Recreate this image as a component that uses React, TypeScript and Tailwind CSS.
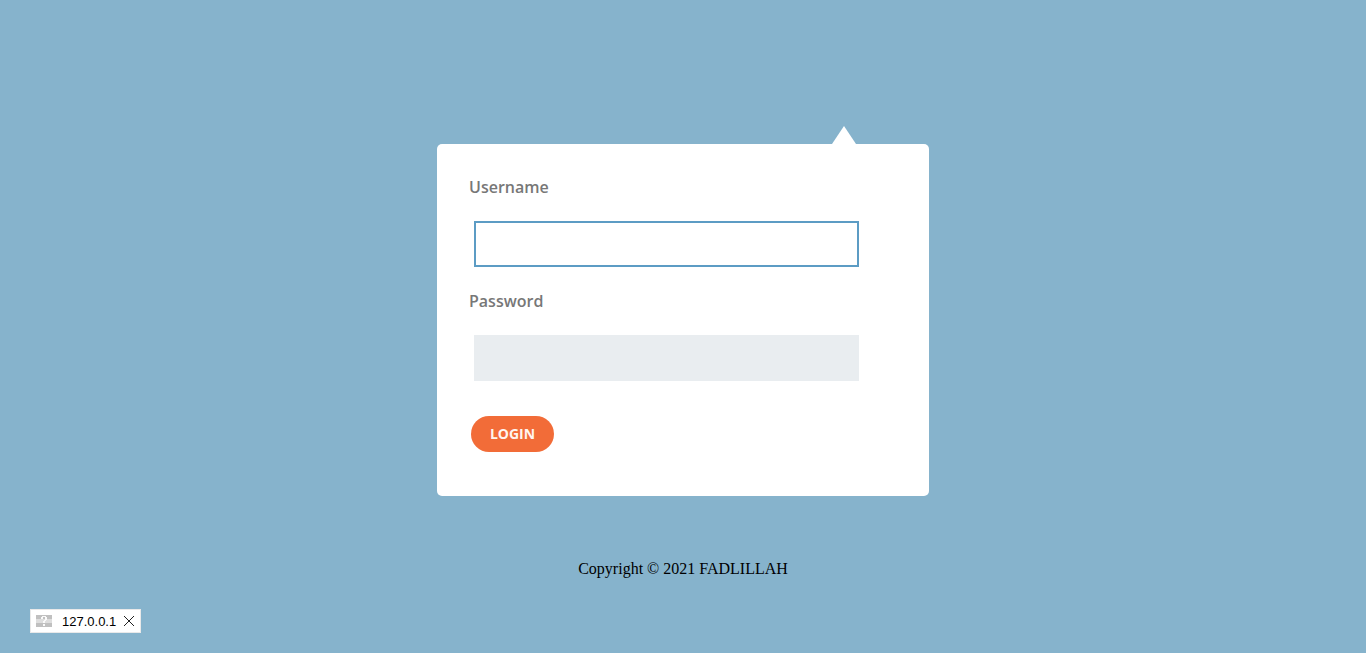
import { useState } from "react";

function HostBadge({ onClose }: { onClose: () => void }) {
  return (
    <div className="fixed left-[30px] top-[609px] flex h-6 w-[111px] items-center border border-[#e9e9e9] bg-white pl-[5px]">
      <svg width="16" height="12" viewBox="0 0 16 12" shapeRendering="crispEdges" aria-hidden="true">
        <path d="M0 0h16v12H0z" fill="#c0c0c0" />
        <path d="M0 4h16v4H0z" fill="#dedede" />
        <path
          d="M6 1h4v1H6zM5 2h2v2H5zM9 2h2v3H9zM8 5h2v1H8zM7 6h2v2H7zM7 9h2v2H7z"
          fill="#fafafa"
        />
      </svg>
      <span className="ml-[10px] w-[54px] whitespace-nowrap pt-0.5 font-['Liberation_Sans',sans-serif] text-[13px] leading-5 text-black">
        127.0.0.1
      </span>
      <button type="button" aria-label="Close" onClick={onClose} className="ml-[7px]">
        <svg width="12" height="12" viewBox="0 0 12 12" aria-hidden="true">
          <path d="M1 1l10 10M11 1L1 11" stroke="#222222" strokeWidth="1" fill="none" />
        </svg>
      </button>
    </div>
  );
}

export default function App() {
  const [badge, setBadge] = useState(true);
  const field =
    "ml-[5px] block h-[46px] w-[385px] border-2 px-3 font-['Open_Sans',sans-serif] text-base text-[#777777] outline-none";
  const label =
    "block font-['Open_Sans',sans-serif] text-base font-semibold leading-[22px] text-[#777777]";

  return (
    <div className="flex min-h-screen flex-col items-center bg-[#86b3cc] pt-[126px]">
      <div className="flex w-[492px] justify-end pr-[73px]">
        <svg width="24" height="18" viewBox="0 0 24 18" aria-hidden="true">
          <path d="M12 0L24 18H0z" fill="#ffffff" />
        </svg>
      </div>
      <form
        className="h-[352px] w-[492px] rounded-[5px] bg-white px-8 pt-8"
        onSubmit={(e) => e.preventDefault()}
      >
        <label htmlFor="username" className={label}>
          Username
        </label>
        <input id="username" type="text" className={`${field} mt-[23px] border-[#5c9cc4] bg-white`} />
        <label htmlFor="password" className={`${label} mt-[23px]`}>
          Password
        </label>
        <input
          id="password"
          type="password"
          className={`${field} mt-[23px] border-[#e9edf0] bg-[#e9edf0]`}
        />
        <button
          type="submit"
          className="ml-[2px] mt-[35px] flex h-9 w-[83px] items-center justify-center rounded-full bg-[#f26c38] pb-0.5 font-['Open_Sans',sans-serif] text-[14px] font-bold text-[#fff5f0]"
        >
          LOGIN
        </button>
      </form>
      <footer className="mt-[63px] font-['Liberation_Serif',serif] text-base leading-5 text-black">
        Copyright © 2021 FADLILLAH
      </footer>
      {badge && <HostBadge onClose={() => setBadge(false)} />}
    </div>
  );
}
